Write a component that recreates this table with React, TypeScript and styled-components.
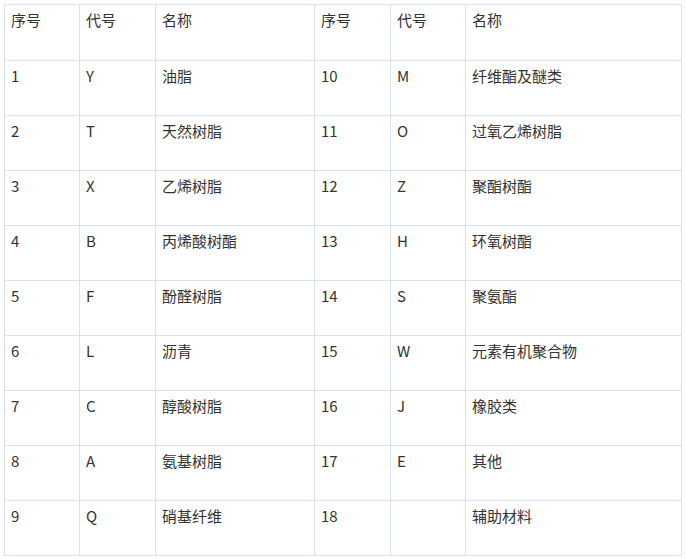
import React from 'react';
import styled, { createGlobalStyle } from 'styled-components';

const GlobalStyle = createGlobalStyle`
  body {
    margin: 0;
    background: #ffffff;
    font-family: "Noto Sans CJK SC", "Noto Sans", sans-serif;
  }
`;

const Wrapper = styled.div`
  padding: 4px 0 0 4px;
`;

const Table = styled.table`
  border-collapse: collapse;
  table-layout: fixed;
  width: 677px;
  color: #333333;
  font-size: 15px;
`;

const Row = styled.tr<{ $head?: boolean }>`
  height: ${(p) => (p.$head ? 56 : 55)}px;
`;

const Cell = styled.td<{ $w: number }>`
  box-sizing: border-box;
  width: ${(p) => p.$w}px;
  border: 1px solid #dbe2e8;
  padding: 4px 6px 0 6px;
  vertical-align: top;
  line-height: 22px;
  text-align: left;
  font-weight: normal;
`;

const widths = [75, 76, 159, 76, 75, 216];

const header = ['序号', '代号', '名称', '序号', '代号', '名称'];

const rows: string[][] = [
  ['1', 'Y', '油脂', '10', 'M', '纤维酯及醚类'],
  ['2', 'T', '天然树脂', '11', 'O', '过氧乙烯树脂'],
  ['3', 'X', '乙烯树脂', '12', 'Z', '聚酯树酯'],
  ['4', 'B', '丙烯酸树酯', '13', 'H', '环氧树酯'],
  ['5', 'F', '酚醛树脂', '14', 'S', '聚氨酯'],
  ['6', 'L', '沥青', '15', 'W', '元素有机聚合物'],
  ['7', 'C', '醇酸树脂', '16', 'J', '橡胶类'],
  ['8', 'A', '氨基树脂', '17', 'E', '其他'],
  ['9', 'Q', '硝基纤维', '18', '', '辅助材料'],
];

export default function App() {
  return (
    <Wrapper>
      <GlobalStyle />
      <Table>
        <tbody>
          <Row $head>
            {header.map((h, i) => (
              <Cell key={i} $w={widths[i]}>
                {h}
              </Cell>
            ))}
          </Row>
          {rows.map((r, ri) => (
            <Row key={ri}>
              {r.map((c, ci) => (
                <Cell key={ci} $w={widths[ci]}>
                  {c}
                </Cell>
              ))}
            </Row>
          ))}
        </tbody>
      </Table>
    </Wrapper>
  );
}
